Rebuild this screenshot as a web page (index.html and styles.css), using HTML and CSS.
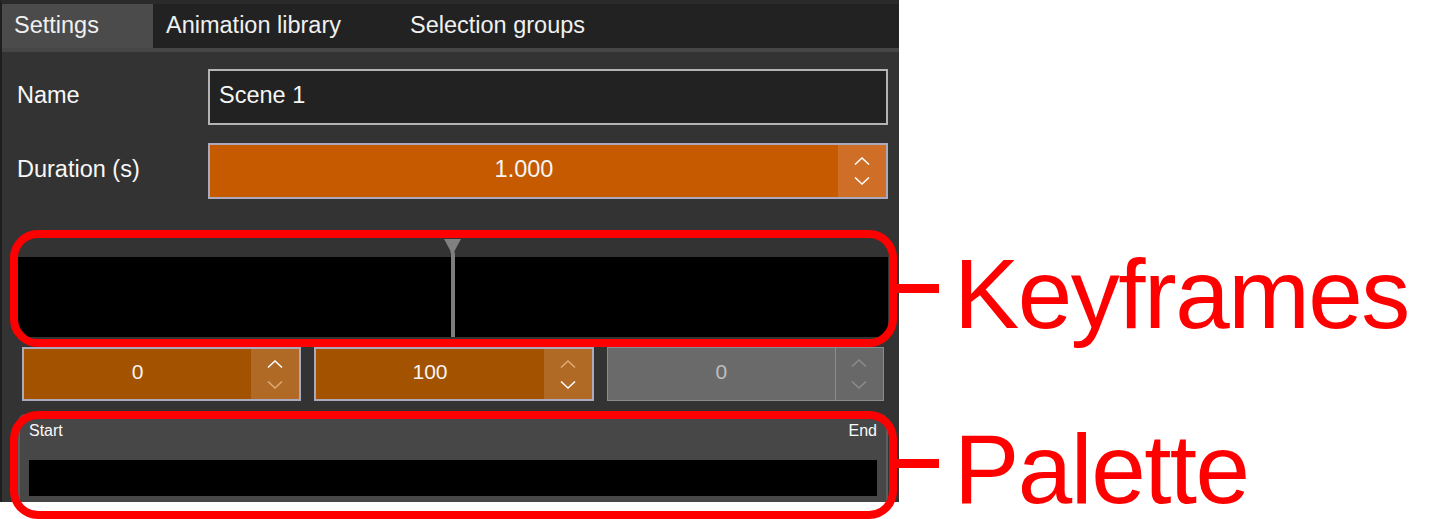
FILE: index.html
```html
<!DOCTYPE html>
<html lang="en">
<head>
    <meta charset="UTF-8">
    <meta name="viewport" content="width=device-width, initial-scale=1.0">
    <title>Scene settings</title>
    <link rel="stylesheet" href="styles.css">
</head>
<body>
    <div class="panel">
        <div class="tabs">
            <div class="tab tab-settings active">Settings</div>
            <div class="tab tab-library">Animation library</div>
            <div class="tab">Selection groups</div>
        </div>

        <div class="content">
            <div class="row">
                <label class="label">Name</label>
                <div class="field text-field">Scene 1</div>
            </div>
            <div class="row">
                <label class="label">Duration (s)</label>
                <div class="field spin-field">
                    <span class="value">1.000</span>
                    <span class="spin">
                        <svg class="chev" viewBox="0 0 16 8"><polyline points="1,7.5 8,1 15,7.5"/></svg>
                        <svg class="chev" viewBox="0 0 16 8"><polyline points="1,0.5 8,7 15,0.5"/></svg>
                    </span>
                </div>
            </div>

            <div class="keyframes">
                <div class="ruler"></div>
                <div class="track"></div>
                <div class="playhead">
                    <svg class="playhead-head" viewBox="0 0 17 14"><polygon points="0,0 17,0 10.5,12 10.5,14 6.5,14 6.5,12"/></svg>
                    <div class="playhead-line"></div>
                </div>
            </div>

            <div class="spinners">
                <div class="small-spin">
                    <span class="value">0</span>
                    <span class="spin">
                        <svg class="chev" viewBox="0 0 16 8"><polyline points="1,7.5 8,1 15,7.5"/></svg>
                        <svg class="chev dim" viewBox="0 0 16 8"><polyline points="1,0.5 8,7 15,0.5"/></svg>
                    </span>
                </div>
                <div class="small-spin">
                    <span class="value">100</span>
                    <span class="spin">
                        <svg class="chev dim" viewBox="0 0 16 8"><polyline points="1,7.5 8,1 15,7.5"/></svg>
                        <svg class="chev" viewBox="0 0 16 8"><polyline points="1,0.5 8,7 15,0.5"/></svg>
                    </span>
                </div>
                <div class="small-spin disabled">
                    <span class="value">0</span>
                    <span class="spin">
                        <svg class="chev" viewBox="0 0 16 8"><polyline points="1,7.5 8,1 15,7.5"/></svg>
                        <svg class="chev" viewBox="0 0 16 8"><polyline points="1,0.5 8,7 15,0.5"/></svg>
                    </span>
                </div>
            </div>

            <div class="palette">
                <div class="palette-labels">
                    <span>Start</span>
                    <span>End</span>
                </div>
                <div class="palette-bar"></div>
            </div>
        </div>
    </div>

    <!-- annotations drawn over the screenshot -->
    <div class="callout-box callout-keyframes"></div>
    <div class="callout-line callout-line-keyframes"></div>
    <div class="callout-text callout-text-keyframes">Keyframes</div>

    <div class="callout-box callout-palette"></div>
    <div class="callout-line callout-line-palette"></div>
    <div class="callout-text callout-text-palette">Palette</div>
</body>
</html>
```

FILE: styles.css
```css
* {
    font-family: "Liberation Sans", Arial, Helvetica, sans-serif;
    box-sizing: border-box;
    margin: 0;
    padding: 0;
}

body {
    background-color: rgb(255, 255, 255);
    position: relative;
    width: 1434px;
    height: 519px;
    overflow: hidden;
}

.panel {
    width: 899px;
    height: 502px;
    background-color: rgb(51, 51, 51);
    border-left: 2px solid rgb(30, 30, 30);
    border-top: 4px solid rgb(42, 42, 42);
    overflow: hidden;
    color: rgb(245, 245, 245);
}

/* tabs */
.tabs {
    display: flex;
    height: 48px;
    background-color: rgb(34, 34, 34);
    border-bottom: 4px solid rgb(70, 70, 70);
}

.tab {
    display: flex;
    align-items: center;
    padding-left: 13px;
    padding-bottom: 2px;
    font-size: 23.5px;
    color: rgb(240, 240, 240);
}

.tab-settings {
    width: 151px;
}

.tab-library {
    width: 244px;
}

.tab.active {
    background-color: rgb(75, 75, 75);
    padding-left: 12px;
}

/* form */
.content {
    padding: 17px 11px 0 15px;
}

.row {
    display: flex;
    align-items: center;
    margin-bottom: 18px;
}

.label {
    width: 191px;
    padding-bottom: 4px;
    font-size: 23.5px;
    color: rgb(248, 248, 248);
}

.field {
    flex: 1;
    height: 56px;
    font-size: 23.5px;
}

.text-field {
    display: flex;
    align-items: center;
    padding: 0 0 3px 9px;
    background-color: rgb(34, 34, 34);
    border: 2px solid rgb(180, 180, 180);
}

.spin-field {
    display: flex;
    background-color: rgb(197, 90, 0);
    border: 2px solid rgb(170, 170, 188);
}

.value {
    flex: 1;
    display: flex;
    align-items: center;
    justify-content: center;
    padding-bottom: 4px;
}

.spin {
    width: 48px;
    display: flex;
    flex-direction: column;
    justify-content: space-around;
    align-items: center;
    padding: 6px 0;
    background-color: rgb(207, 111, 39);
}

.chev {
    width: 16px;
    height: 8px;
    fill: none;
    stroke: rgb(255, 255, 255);
    stroke-width: 1.5;
}

.chev.dim {
    stroke: rgb(222, 170, 120);
}

/* keyframes */
.keyframes {
    position: relative;
    margin: 38px 0 0 -1px;
}

.ruler {
    height: 20px;
}

.track {
    height: 80px;
    background-color: rgb(0, 0, 0);
}

.playhead {
    position: absolute;
    top: 2px;
    left: 50%;
    width: 17px;
    height: 98px;
    margin-left: -8px;
    display: flex;
    flex-direction: column;
    align-items: center;
}

.playhead-head {
    width: 17px;
    height: 14px;
    fill: rgb(128, 128, 128);
}

.playhead-line {
    width: 4px;
    flex: 1;
    background-color: rgb(125, 125, 125);
}

/* small spinners */
.spinners {
    display: flex;
    column-gap: 13px;
    margin: 10px 4px 0 5px;
}

.small-spin {
    flex: 1;
    display: flex;
    height: 54px;
    font-size: 21px;
    background-color: rgb(163, 82, 0);
    border: 2px solid rgb(170, 170, 188);
}

.small-spin .spin {
    background-color: rgb(176, 106, 38);
    padding: 4px 0;
}

.small-spin.disabled {
    background-color: rgb(106, 106, 106);
    border: 1px solid rgb(140, 140, 140);
    color: rgb(190, 190, 190);
}

.small-spin.disabled .spin {
    background-color: rgb(104, 104, 104);
    border-left: 1px solid rgb(140, 140, 140);
}

.small-spin.disabled .chev {
    stroke: rgb(140, 140, 140);
}

/* palette */
.palette {
    margin: 13px 0 0 1px;
    height: 100px;
    padding: 6px 9px 0 9px;
    background-color: rgb(71, 71, 71);
    border: 2px solid rgb(94, 94, 94);
    border-radius: 8px 8px 0 0;
}

.palette-labels {
    display: flex;
    justify-content: space-between;
    font-size: 16px;
    height: 38px;
    color: rgb(250, 250, 250);
}

.palette-bar {
    height: 36px;
    background-color: rgb(0, 0, 0);
}

/* annotations */
.callout-box {
    position: absolute;
    left: 10px;
    width: 887px;
    border: 8px solid rgb(255, 0, 0);
    border-radius: 28px;
}

.callout-keyframes {
    top: 230px;
    height: 117px;
}

.callout-palette {
    top: 411px;
    height: 108px;
}

.callout-line {
    position: absolute;
    left: 897px;
    width: 42px;
    height: 9px;
    background-color: rgb(255, 0, 0);
}

.callout-line-keyframes {
    top: 284px;
}

.callout-line-palette {
    top: 459px;
}

.callout-text {
    position: absolute;
    left: 954px;
    font-size: 98px;
    line-height: 0.8;
    letter-spacing: -1.5px;
    color: rgb(255, 0, 0);
}

.callout-text-keyframes {
    top: 255px;
}

.callout-text-palette {
    top: 430px;
}
```
